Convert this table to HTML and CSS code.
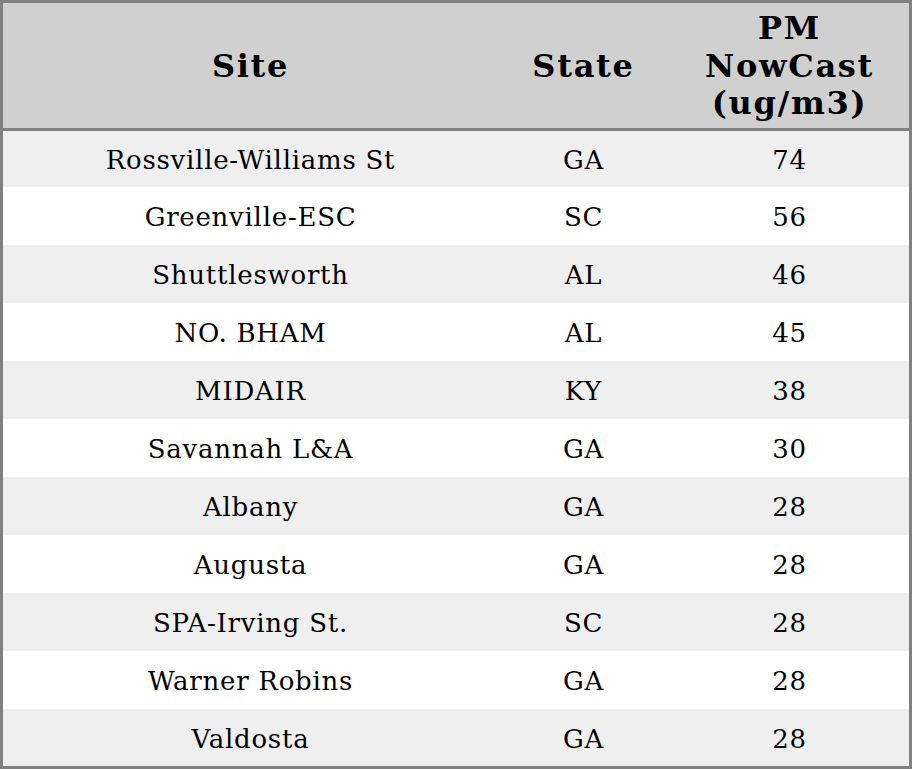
FILE: index.html
```html
<!DOCTYPE html>
<html>
<head>
<meta charset="utf-8">
<link rel="stylesheet" href="styles.css">
</head>
<body>
<table class="aq">
  <colgroup>
    <col class="c-site">
    <col class="c-state">
    <col class="c-pm">
  </colgroup>
  <thead>
    <tr class="head"><th>Site</th><th>State</th><th>PM<br>NowCast<br>(ug/m3)</th></tr>
  </thead>
  <tbody>
    <tr class="r first"><td>Rossville-Williams St</td><td>GA</td><td>74</td></tr>
    <tr class="r"><td>Greenville-ESC</td><td>SC</td><td>56</td></tr>
    <tr class="r"><td>Shuttlesworth</td><td>AL</td><td>46</td></tr>
    <tr class="r"><td>NO. BHAM</td><td>AL</td><td>45</td></tr>
    <tr class="r"><td>MIDAIR</td><td>KY</td><td>38</td></tr>
    <tr class="r"><td>Savannah L&amp;A</td><td>GA</td><td>30</td></tr>
    <tr class="r"><td>Albany</td><td>GA</td><td>28</td></tr>
    <tr class="r"><td>Augusta</td><td>GA</td><td>28</td></tr>
    <tr class="r"><td>SPA-Irving St.</td><td>SC</td><td>28</td></tr>
    <tr class="r"><td>Warner Robins</td><td>GA</td><td>28</td></tr>
    <tr class="r last"><td>Valdosta</td><td>GA</td><td>28</td></tr>
  </tbody>
</table>
</body>
</html>
```
FILE: styles.css
```css
html, body {
  margin: 0;
  padding: 0;
  background: #ffffff;
}
.aq {
  width: 912px;
  border-collapse: separate;
  border-spacing: 0;
  border: 3px solid #808080;
  font-family: "DejaVu Serif", serif;
  color: #000;
  table-layout: fixed;
}
.c-site { width: 494px; }
.c-state { width: 172px; }
.c-pm { width: 240px; }
.head {
  height: 128px;
  background: #d0d0d0;
}
.head th {
  font-size: 32px;
  font-weight: bold;
  line-height: 37.5px;
  letter-spacing: 1.7px;
  text-align: center;
  vertical-align: middle;
  padding: 2px 0 0 1px;
  border-bottom: 3px solid #808080;
}
.r td {
  font-size: 26px;
  letter-spacing: 0.75px;
  text-align: center;
  vertical-align: middle;
  padding: 2px 0 0 1px;
}
.r { height: 58px; background: #ffffff; }
.r:nth-child(odd) { background: #efefef; }
.r.first { height: 56px; }
.r.last { height: 57px; }
```
